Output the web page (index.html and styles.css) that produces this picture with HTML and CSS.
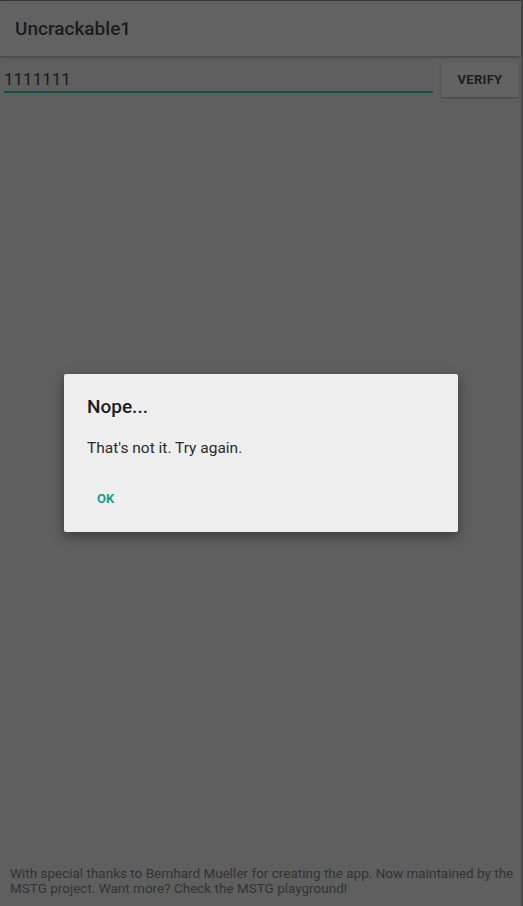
FILE: index.html
```html
<!DOCTYPE html>
<html lang="en">
  <head>
    <meta charset="UTF-8" />
    <title>Uncrackable1</title>
    <link rel="stylesheet" href="styles.css">
  </head>
  <body>
    <div class="screen">
      <div class="toolbar">Uncrackable1</div>

      <div class="form-row">
        <div class="field">1111111</div>
        <button class="verify-btn">VERIFY</button>
      </div>

      <div class="content"></div>

      <p class="footer">
        With special thanks to Bernhard Mueller for creating the app. Now maintained by the
        MSTG project. Want more? Check the MSTG playground!
      </p>

      <!-- dialog -->
      <div class="dialog">
        <h3>Nope...</h3>
        <p>That's not it. Try again.</p>
        <div class="dialog-actions">
          <button class="ok-btn">OK</button>
        </div>
      </div>
    </div>
  </body>
</html>
```

FILE: styles.css
```css
body {
  margin: 0;
  font-family: Roboto, 'Noto Sans', sans-serif;
  background-color: #5f5f5f;
}

.screen {
  position: relative;
  width: 523px;
  height: 906px;
  display: flex;
  flex-direction: column;
  background-color: #5f5f5f;
  border-top: 1px solid #3c3c3c;
  border-right: 2px solid #4a4a4a;
  box-sizing: border-box;
}

.toolbar {
  height: 55px;
  display: flex;
  align-items: center;
  padding-left: 15px;
  font-size: 19px;
  font-weight: 500;
  color: #1c1c1c;
  background-color: #626262;
  box-shadow: 0 1px 3px rgba(0, 0, 0, 0.35);
  box-sizing: border-box;
}

.form-row {
  display: flex;
  align-items: flex-start;
  padding: 6px 2px 0 4px;
  gap: 8px;
}

.field {
  flex: 1;
  height: 26px;
  margin-top: 5px;
  font-size: 17px;
  line-height: 24px;
  color: #1a1a1a;
  border-bottom: 2px solid #0d5248;
  box-sizing: border-box;
}

.verify-btn {
  width: 78px;
  height: 35px;
  border: none;
  border-radius: 2px;
  background-color: #636363;
  box-shadow: 0 1px 2px rgba(0, 0, 0, 0.3);
  font-family: Roboto, sans-serif;
  font-size: 13px;
  font-weight: 700;
  letter-spacing: 0.3px;
  color: #1e1e1e;
}

.content {
  flex: 1;
}

.footer {
  margin: 0 0 10px 10px;
  padding-right: 4px;
  font-size: 13.5px;
  line-height: 15px;
  color: #333333;
}

.dialog {
  position: absolute;
  top: 373px;
  left: 64px;
  width: 394px;
  height: 158px;
  background-color: #eeeeee;
  border-radius: 2px;
  box-shadow: 0 4px 12px rgba(0, 0, 0, 0.4);
  padding: 21px 24px 0 23px;
  box-sizing: border-box;
}

.dialog h3 {
  margin: 0;
  font-size: 19px;
  font-weight: 500;
  color: #1d1d1d;
}

.dialog p {
  margin: 21px 0 0;
  font-size: 15.5px;
  color: #2a2a2a;
}

.dialog-actions {
  margin-top: 31px;
}

.ok-btn {
  border: none;
  background: none;
  padding: 0 0 0 10px;
  font-family: Roboto, sans-serif;
  font-size: 13px;
  font-weight: 700;
  color: #1a9e8c;
}
```
